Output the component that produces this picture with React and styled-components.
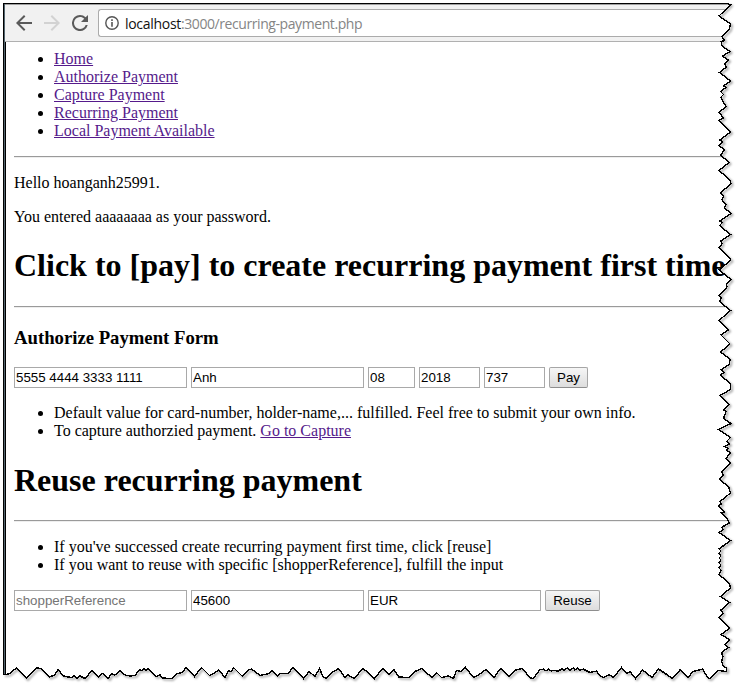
import React from "react";
import styled, { createGlobalStyle } from "styled-components";

const GlobalStyle = createGlobalStyle`
  html, body { margin: 0; padding: 0; background: #fff; overflow: hidden; }
  *, *::before, *::after { box-sizing: border-box; }
`;

const Capture = styled.div`
  position: relative;
  width: 741px;
  height: 689px;
  padding: 3px 0 0 3px;
  overflow: hidden;
  background: #fff;
`;

const Frame = styled.div`
  height: 686px;
  border-top: 1px solid #000;
  border-left: 1px solid #000;
  background: #fff;
`;

const BrowserWindow = styled.div`
  height: 100%;
  border-left: 1px solid #52646e;
`;

const Toolbar = styled.header`
  display: flex;
  align-items: center;
  height: 38px;
  padding: 0 0 0 11px;
  background: #f1f1f1;
  border-top: 1px solid #a0a0a0;
  border-bottom: 1px solid #b0b0b0;
`;

const NavIcon = styled.svg`
  flex: none;
  width: 16px;
  height: 16px;
  margin-right: 12px;
  fill: ${(p) => (p.$disabled ? "#d2d2d2" : "#5a5a5a")};
`;

const AddressBar = styled.div`
  display: flex;
  align-items: center;
  flex: 1;
  height: 28px;
  margin-left: -2px;
  padding-left: 6px;
  border: 1px solid #ababab;
  border-right: 0;
  border-radius: 3px 0 0 3px;
  background: #fff;
`;

const InfoIcon = styled.svg`
  flex: none;
  width: 14px;
  height: 14px;
  margin-right: 6px;
`;

const Url = styled.span`
  padding-top: 2px;
  font: 14px/20px "Open Sans", sans-serif;
  letter-spacing: -0.42px;
  color: #858585;
  white-space: nowrap;
`;

const Host = styled.span`
  color: #111;
  letter-spacing: -0.3px;
`;

const Page = styled.main`
  height: 640px;
  padding: 8px 8px 0 8px;
  border-left: 1px solid #000;
  font: 16px/18px "Liberation Serif", "Times New Roman", serif;
  color: #000;
  white-space: nowrap;
  overflow: hidden;
`;

const List = styled.ul`
  margin: ${(p) => (p.$first ? "0" : "16px")} 0 16px;
  padding: 0 0 0 40px;
`;

const Link = styled.a`
  color: #551a8b;
  text-decoration: underline;
`;

const Rule = styled.hr`
  height: 2px;
  margin: 0;
  border: 0;
  border-top: 1px solid #9a9a9a;
  border-bottom: 1px solid #eee;
`;

const Paragraph = styled.p`
  margin: 16px 0;
`;

const Heading = styled.h1`
  margin: 21.44px 0;
  font-size: 32px;
  line-height: 37px;
`;

const Subheading = styled.h3`
  margin: 18.72px 0;
  font-size: 18.72px;
  line-height: 22px;
`;

const Form = styled.form`
  display: flex;
  gap: 4px;
  height: 21px;
`;

const Field = styled.input`
  width: ${(p) => p.$width || 173}px;
  height: 21px;
  margin: 0;
  padding: 1px;
  border: 1px solid #a9a9a9;
  border-radius: 0;
  outline: 0;
  background: #fff;
  color: #000;
  font: 13.333px "Liberation Sans", Arial, sans-serif;
  &::placeholder { color: #757575; opacity: 1; }
`;

const Button = styled.button`
  width: ${(p) => p.$width}px;
  height: 21px;
  padding: 0;
  border: 1px solid #a6a6a6;
  border-bottom-color: #8e8e8e;
  border-radius: 2px;
  background: linear-gradient(#f6f6f6, #dddddd);
  color: #000;
  font: 13.333px "Liberation Sans", Arial, sans-serif;
`;

const TornEdge = styled.svg`
  position: absolute;
  inset: 0;
  pointer-events: none;
`;

const rightEdge =
  "727,3.5 730.5,4.7 719,16 730.5,24 729.5,29 722,36.5 724.5,40.5 721,41.5 722,46 730,51.5 722.5,56 728.5,60 724.5,64 726.5,67 719.5,72.5 730.5,81 723.5,86 726,87.5 720.5,91.5 723.5,94.5 721,97 723,101.5 726,106.5 719,112.5 723.5,118 719,120.5 730.5,132 720,140 723,142 719,145.5 724.5,150 720.5,155 729,162.5 719,170.5 730,180 731,184 720.5,192.5 723.5,196 722,200 726,204.5 724.5,208 731,213.5 720,221 722.5,222.5 719.5,225.5 730.5,234.5 721,241 722,244 719,247.5 731,260 719,270 731,279.5 726.5,284.5 727,287 719,295.5 721.5,297.5 719.5,301.5 730.5,310.5 719,320.5 728.5,330 721,335 730,344 720.5,352 730,359 729.5,364 721,370 724,372.5 720.5,375 730.5,384 730.5,389.5 720,395.5 729,404.5 724,410 726,411.5 723.5,418.5 731,423.5 718.5,429.5 730.5,437.5 726.5,441.5 729.5,444 724.5,446.5 728,448.5 726.5,450.5 730.5,452.5 726,458.5 730.5,463.5 721.5,471.5 723.5,475 719.5,479.5 728.5,486.5 730.5,493 720,501.5 721.5,504 718.5,506 724.5,512.5 721,512.5 727.5,519.5 729,523 721.5,527.5 723.5,529.5 719,532.5 730.5,540.5 721,547.5 719,549 721,551 719,553 721,556 719,558 721,560 719,563 721,565 719,568 721,570 719,574.5 729.5,583.5 730.5,588 720.5,596.5 729.5,602.5 721,610 723,613.5 719,617.5 729.5,628.5 721,634.5 729.5,639.5 725,644.5 728.5,647.5 721.5,652.5 723,656.5 721.5,661.5 723.5,666.5 726.5,668 726.5,671.5";

const bottomEdge =
  "718,670.5 710,678.5 707.5,677.5 704,671.5 702.5,669 693,671.5 688,677.5 680,670 672,678.5 667.5,675 658.5,669 652,677.5 642.5,670 635.5,678.5 630,671.5 627,673.5 621.5,667.5 613.5,677.5 609,674.5 604,677.5 599.5,675.5 596.5,671 590,672.5 585,670 583.5,669 580,670 578,668 575,670 573.5,668 570,670 567.5,668 564,670 562,669 558,671 553,670.5 551,671 548.5,669 546,671 543.5,669 539.5,670 533.5,678.5 530.5,678 522,668.5 516,670 509,676.5 500.5,668.5 494,677.5 486,669.5 477.5,675.5 473.5,677.5 465.5,667.5 461.5,671.5 456.5,670.5 453.5,678.5 448.5,676 441.5,677.5 436.5,672.5 432,677.5 421.5,668.5 415,671.5 409,677.5 399,677 394,669.5 389.5,674.5 382.5,668.5 374.5,678.5 370,674 363,668.5 354,678.5 348,675 345,677.5 338.5,668.5 332,672.5 326,678.5 323,676.5 319.5,668.5 315,676.5 309,671.5 303.5,678.5 293,667.5 288,673.5 280,673.5 277.5,676 271.5,670.5 269,673.5 260,675.5 251.5,669 247.5,670.5 242.5,676.5 233.5,667.5 231.5,671.5 228.5,671 225,677.5 220,671.5 218.5,670 215,672.5 209.5,675.5 201.5,667.5 194.5,676.5 186,667.5 182.5,672.5 177,673.5 171.5,678.5 162.5,678 160,675 156,676.5 148.5,668.5 146,670.5 144,668.5 142,670.5 139.5,669.5 135,675.5 130,676 125,675 120,671 115,675 111.5,673.5 108.5,678.5 102.5,673.5 98.5,677 92,670.5 85,678.5 80,676 77,678.5 74,676 72,677.5 68.5,677 63.5,676 58,669.5 54.5,675 49.5,677 41.5,668.5 36.5,668 26.5,678.5 16.5,668 12,671.5 9,674 3.5,674.5";

const edge = `${rightEdge} ${bottomEdge}`;

const navigation = [
  "Home",
  "Authorize Payment",
  "Capture Payment",
  "Recurring Payment",
  "Local Payment Available",
];

export default function App() {
  return (
    <Capture>
      <GlobalStyle />
      <Frame>
        <BrowserWindow>
          <Toolbar>
            <NavIcon viewBox="4 4 16 16">
              <path d="M20 11H7.83l5.59-5.59L12 4l-8 8 8 8 1.41-1.41L7.83 13H20z" />
            </NavIcon>
            <NavIcon viewBox="4 4 16 16" $disabled>
              <path d="M12 4l-1.41 1.41L16.17 11H4v2h12.17l-5.58 5.59L12 20l8-8z" />
            </NavIcon>
            <NavIcon viewBox="4 4 16 16">
              <path d="M17.65 6.35A7.96 7.96 0 0 0 12 4a8 8 0 1 0 7.73 10h-2.08A6 6 0 1 1 12 6c1.66 0 3.14.69 4.22 1.78L13 11h7V4z" />
            </NavIcon>
            <AddressBar>
              <InfoIcon viewBox="0 0 14 14">
                <circle cx="7" cy="7" r="6.2" fill="none" stroke="#555" strokeWidth="1.4" />
                <path d="M6.2 3.3h1.6v1.6H6.2zM6.2 6h1.6v4.7H6.2z" fill="#555" />
              </InfoIcon>
              <Url>
                <Host>localhost</Host>:3000/recurring-payment.php
              </Url>
            </AddressBar>
          </Toolbar>
          <Page>
            <List $first>
              {navigation.map((label) => (
                <li key={label}>
                  <Link href="#">{label}</Link>
                </li>
              ))}
            </List>
            <Rule />
            <Paragraph>Hello hoanganh25991.</Paragraph>
            <Paragraph>You entered aaaaaaaa as your password.</Paragraph>
            <Heading>Click to [pay] to create recurring payment first time</Heading>
            <Rule />
            <Subheading>Authorize Payment Form</Subheading>
            <Form>
              <Field defaultValue="5555 4444 3333 1111" />
              <Field defaultValue="Anh" />
              <Field defaultValue="08" $width={47} />
              <Field defaultValue="2018" $width={61} />
              <Field defaultValue="737" $width={61} />
              <Button type="button" $width={39}>Pay</Button>
            </Form>
            <List>
              <li>Default value for card-number, holder-name,... fulfilled. Feel free to submit your own info.</li>
              <li>
                To capture authorzied payment. <Link href="#">Go to Capture</Link>
              </li>
            </List>
            <Heading>Reuse recurring payment</Heading>
            <Rule />
            <List>
              <li>If you've successed create recurring payment first time, click [reuse]</li>
              <li>If you want to reuse with specific [shopperReference], fulfill the input</li>
            </List>
            <Form>
              <Field placeholder="shopperReference" />
              <Field defaultValue="45600" />
              <Field defaultValue="EUR" />
              <Button type="button" $width={55}>Reuse</Button>
            </Form>
          </Page>
        </BrowserWindow>
      </Frame>
      <TornEdge width="741" height="689" viewBox="0 0 741 689" aria-hidden="true">
        <defs>
          <filter id="edge-shadow" x="-5%" y="-5%" width="110%" height="110%">
            <feGaussianBlur stdDeviation="1.1" />
          </filter>
          <clipPath id="outside">
            <polygon points={`${edge} 0,674.5 0,689 741,689 741,0 727,0`} />
          </clipPath>
        </defs>
        <polygon points={`${edge} 0,674.5 0,689 741,689 741,0 727,0`} fill="#fff" />
        <g clipPath="url(#outside)">
          <polyline
            points={edge}
            transform="translate(1.5 1.5)"
            fill="none"
            stroke="#000"
            strokeOpacity="0.42"
            strokeWidth="1.6"
            filter="url(#edge-shadow)"
          />
        </g>
        <polyline points={edge} fill="none" stroke="#000" strokeWidth="1.4" shapeRendering="crispEdges" />
      </TornEdge>
    </Capture>
  );
}
